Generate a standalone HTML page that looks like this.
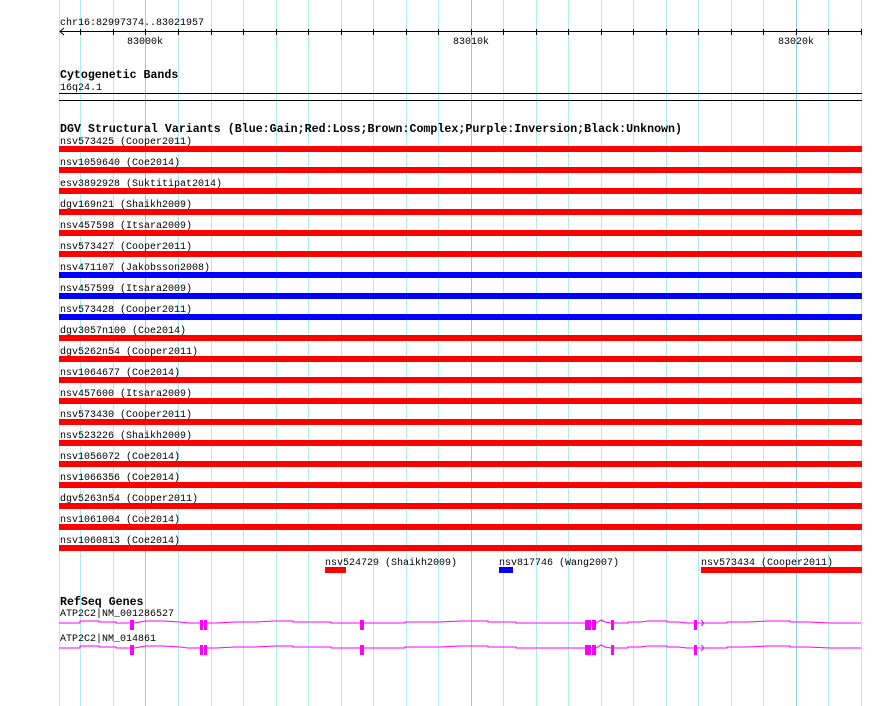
<!DOCTYPE html>
<html><head><meta charset="utf-8"><style>
html,body{margin:0;padding:0;background:#fff;width:890px;height:706px;overflow:hidden}
svg{display:block}
text{font-family:"Liberation Mono",monospace;font-size:10px;fill:#000}
.b{font-weight:bold;font-size:11.6px}
</style></head><body>
<svg width="890" height="706" xmlns="http://www.w3.org/2000/svg">
<g stroke="#aeeeee" stroke-width="1">
<line x1="59.5" y1="0" x2="59.5" y2="706"/>
<line x1="80.5" y1="0" x2="80.5" y2="706"/>
<line x1="113.5" y1="0" x2="113.5" y2="706"/>
<line x1="178.5" y1="0" x2="178.5" y2="706"/>
<line x1="211.5" y1="0" x2="211.5" y2="706"/>
<line x1="243.5" y1="0" x2="243.5" y2="706"/>
<line x1="276.5" y1="0" x2="276.5" y2="706"/>
<line x1="308.5" y1="0" x2="308.5" y2="706"/>
<line x1="341.5" y1="0" x2="341.5" y2="706"/>
<line x1="373.5" y1="0" x2="373.5" y2="706"/>
<line x1="406.5" y1="0" x2="406.5" y2="706"/>
<line x1="438.5" y1="0" x2="438.5" y2="706"/>
<line x1="503.5" y1="0" x2="503.5" y2="706"/>
<line x1="536.5" y1="0" x2="536.5" y2="706"/>
<line x1="568.5" y1="0" x2="568.5" y2="706"/>
<line x1="601.5" y1="0" x2="601.5" y2="706"/>
<line x1="633.5" y1="0" x2="633.5" y2="706"/>
<line x1="666.5" y1="0" x2="666.5" y2="706"/>
<line x1="698.5" y1="0" x2="698.5" y2="706"/>
<line x1="731.5" y1="0" x2="731.5" y2="706"/>
<line x1="763.5" y1="0" x2="763.5" y2="706"/>
<line x1="828.5" y1="0" x2="828.5" y2="706"/>
<line x1="861.5" y1="0" x2="861.5" y2="706"/>
</g>
<g stroke="#8cd0e6" stroke-width="1">
<line x1="145.5" y1="0" x2="145.5" y2="706"/>
<line x1="471.5" y1="0" x2="471.5" y2="706"/>
<line x1="796.5" y1="0" x2="796.5" y2="706"/>
</g>
<text x="60" y="25">chr16:82997374..83021957</text>
<g stroke="#000" stroke-width="1">
<line x1="60" y1="31.5" x2="862" y2="31.5"/>
<polyline points="64,28 60,31.5 64,35" fill="none"/>
<line x1="80.5" y1="29" x2="80.5" y2="35"/><line x1="113.5" y1="29" x2="113.5" y2="35"/><line x1="145.5" y1="29" x2="145.5" y2="35"/><line x1="178.5" y1="29" x2="178.5" y2="35"/><line x1="211.5" y1="29" x2="211.5" y2="35"/><line x1="243.5" y1="29" x2="243.5" y2="35"/><line x1="276.5" y1="29" x2="276.5" y2="35"/><line x1="308.5" y1="29" x2="308.5" y2="35"/><line x1="341.5" y1="29" x2="341.5" y2="35"/><line x1="373.5" y1="29" x2="373.5" y2="35"/><line x1="406.5" y1="29" x2="406.5" y2="35"/><line x1="438.5" y1="29" x2="438.5" y2="35"/><line x1="471.5" y1="29" x2="471.5" y2="35"/><line x1="503.5" y1="29" x2="503.5" y2="35"/><line x1="536.5" y1="29" x2="536.5" y2="35"/><line x1="568.5" y1="29" x2="568.5" y2="35"/><line x1="601.5" y1="29" x2="601.5" y2="35"/><line x1="633.5" y1="29" x2="633.5" y2="35"/><line x1="666.5" y1="29" x2="666.5" y2="35"/><line x1="698.5" y1="29" x2="698.5" y2="35"/><line x1="731.5" y1="29" x2="731.5" y2="35"/><line x1="763.5" y1="29" x2="763.5" y2="35"/><line x1="796.5" y1="29" x2="796.5" y2="35"/><line x1="828.5" y1="29" x2="828.5" y2="35"/><line x1="861.5" y1="29" x2="861.5" y2="35"/>
<line x1="59" y1="93.5" x2="862" y2="93.5"/>
<line x1="59" y1="100.5" x2="862" y2="100.5"/>
</g>
<text x="127" y="44">83000k</text>
<text x="453" y="44">83010k</text>
<text x="778" y="44">83020k</text>
<text class="b" x="60" y="78">Cytogenetic Bands</text>
<text x="60" y="90">16q24.1</text>
<text class="b" x="60" y="132" textLength="622">DGV Structural Variants (Blue:Gain;Red:Loss;Brown:Complex;Purple:Inversion;Black:Unknown)</text>
<g>
<text x="60" y="144">nsv573425 (Cooper2011)</text><rect x="59" y="146" width="803" height="6" fill="#f00"/>
<text x="60" y="165">nsv1059640 (Coe2014)</text><rect x="59" y="167" width="803" height="6" fill="#f00"/>
<text x="60" y="186">esv3892928 (Suktitipat2014)</text><rect x="59" y="188" width="803" height="6" fill="#f00"/>
<text x="60" y="207">dgv169n21 (Shaikh2009)</text><rect x="59" y="209" width="803" height="6" fill="#f00"/>
<text x="60" y="228">nsv457598 (Itsara2009)</text><rect x="59" y="230" width="803" height="6" fill="#f00"/>
<text x="60" y="249">nsv573427 (Cooper2011)</text><rect x="59" y="251" width="803" height="6" fill="#f00"/>
<text x="60" y="270">nsv471107 (Jakobsson2008)</text><rect x="59" y="272" width="803" height="6" fill="#00f"/>
<text x="60" y="291">nsv457599 (Itsara2009)</text><rect x="59" y="293" width="803" height="6" fill="#00f"/>
<text x="60" y="312">nsv573428 (Cooper2011)</text><rect x="59" y="314" width="803" height="6" fill="#00f"/>
<text x="60" y="333">dgv3057n100 (Coe2014)</text><rect x="59" y="335" width="803" height="6" fill="#f00"/>
<text x="60" y="354">dgv5262n54 (Cooper2011)</text><rect x="59" y="356" width="803" height="6" fill="#f00"/>
<text x="60" y="375">nsv1064677 (Coe2014)</text><rect x="59" y="377" width="803" height="6" fill="#f00"/>
<text x="60" y="396">nsv457600 (Itsara2009)</text><rect x="59" y="398" width="803" height="6" fill="#f00"/>
<text x="60" y="417">nsv573430 (Cooper2011)</text><rect x="59" y="419" width="803" height="6" fill="#f00"/>
<text x="60" y="438">nsv523226 (Shaikh2009)</text><rect x="59" y="440" width="803" height="6" fill="#f00"/>
<text x="60" y="459">nsv1056072 (Coe2014)</text><rect x="59" y="461" width="803" height="6" fill="#f00"/>
<text x="60" y="480">nsv1066356 (Coe2014)</text><rect x="59" y="482" width="803" height="6" fill="#f00"/>
<text x="60" y="501">dgv5263n54 (Cooper2011)</text><rect x="59" y="503" width="803" height="6" fill="#f00"/>
<text x="60" y="522">nsv1061004 (Coe2014)</text><rect x="59" y="524" width="803" height="6" fill="#f00"/>
<text x="60" y="543">nsv1060813 (Coe2014)</text><rect x="59" y="545" width="803" height="6" fill="#f00"/>
<text x="325" y="565">nsv524729 (Shaikh2009)</text><rect x="325" y="567" width="21" height="6" fill="#f00"/>
<text x="499" y="565">nsv817746 (Wang2007)</text><rect x="499" y="567" width="14" height="6" fill="#00f"/>
<text x="701" y="565">nsv573434 (Cooper2011)</text><rect x="701" y="567" width="161" height="6" fill="#f00"/>
</g>
<text class="b" x="60" y="605">RefSeq Genes</text>
<text x="60" y="616">ATP2C2|NM_001286527</text>
<text x="60" y="641">ATP2C2|NM_014861</text>
<g id="g1" fill="#f0f" stroke="#f0f">
<polyline fill="none" stroke-width="1" points="59,623 80,623 80,621 99,621 99,622 116,622 116,623 130,623 134,623 146,621 163,621 180,622 188,623 200,623 207,623 216,623 235,622 255,622 275,621 293,621 293,622 331,622 331,623 350,623 377,623 405,623 405,622 439,622 461,621 488,621 488,622 516,622 516,623 543,623 571,623 585,623 596,623 601,620 605,622 611,623 614,623 628,623 628,622 640,622 648,621 667,621 667,622 678,622 687,623 697,623 707,623 727,623 727,622 748,622 768,621 790,621 790,622 808,622 830,623 845,623 861,623"/>
<rect x="130" y="620" width="4" height="10" stroke="none"/>
<rect x="200" y="620" width="3" height="10" stroke="none"/>
<rect x="204" y="620" width="3" height="10" stroke="none"/>
<rect x="360" y="620" width="4" height="10" stroke="none"/>
<rect x="585" y="620" width="6" height="10" stroke="none"/>
<rect x="592" y="620" width="4" height="10" stroke="none"/>
<rect x="611" y="620" width="3" height="10" stroke="none"/>
<rect x="694" y="620" width="3" height="10" stroke="none"/>
<polyline fill="none" stroke-width="1" points="701,620 704,623 701,626"/>
</g>
<use href="#g1" y="25"/>
</svg>
</body></html>
